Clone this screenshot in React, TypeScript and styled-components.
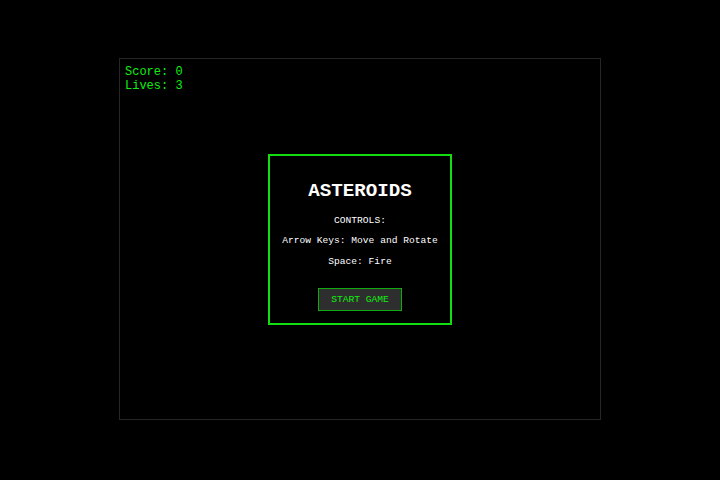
import styled, { createGlobalStyle } from "styled-components";

const GlobalStyle = createGlobalStyle`
  html, body {
    margin: 0;
    padding: 0;
    background: #000;
  }
  body {
    font-family: "Liberation Mono", "Courier New", monospace;
    font-size: 12px;
  }
`;

const Page = styled.div`
  width: 720px;
  height: 478px;
  display: flex;
  align-items: center;
  justify-content: center;
`;

const GameArea = styled.div`
  position: relative;
  width: 480px;
  height: 360px;
  border: 1px solid #262626;
  background: #000;
`;

const Hud = styled.div`
  position: absolute;
  top: 6px;
  left: 5px;
  color: #1e1;
  font-size: 12px;
  line-height: 14px;
`;

const Overlay = styled.div`
  position: absolute;
  inset: 0;
  padding-top: 1px;
  display: flex;
  align-items: center;
  justify-content: center;
`;

const Menu = styled.div`
  border: 2px solid #1d1;
  background: #000;
  padding: 12px;
  color: #fff;
  text-align: center;
`;

const Title = styled.h1`
  font-size: 19.2px;
  font-weight: bold;
  margin: 12px 0 13px;
  line-height: 22px;
`;

const Line = styled.p`
  font-size: 9.6px;
  line-height: 11px;
  margin: 0 0 9.6px;
`;

const StartButton = styled.button`
  margin-top: 12px;
  font-family: inherit;
  font-size: 9.6px;
  line-height: 11px;
  padding: 5px 12px;
  color: #1e1;
  background: #2e2e2e;
  border: 1px solid #1a1;
  cursor: pointer;
`;

export default function App() {
  return (
    <>
      <GlobalStyle />
      <Page>
        <GameArea>
          <Hud>
            <div>Score: 0</div>
            <div>Lives: 3</div>
          </Hud>
          <Overlay>
            <Menu>
              <Title>ASTEROIDS</Title>
              <Line>CONTROLS:</Line>
              <Line>Arrow Keys: Move and Rotate</Line>
              <Line>Space: Fire</Line>
              <StartButton>START GAME</StartButton>
            </Menu>
          </Overlay>
        </GameArea>
      </Page>
    </>
  );
}
